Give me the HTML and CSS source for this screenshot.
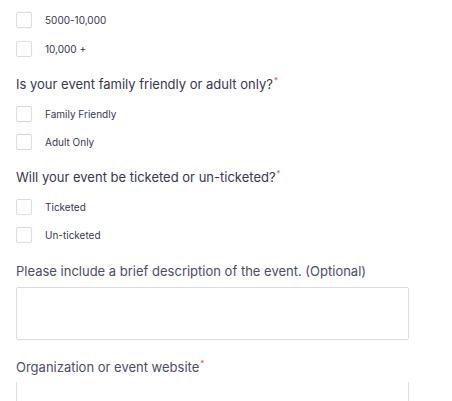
FILE: index.html
```html
<!DOCTYPE html>
<html>
<head>
<meta charset="utf-8">
<link rel="stylesheet" href="styles.css">
</head>
<body>
<div class="form">
  <div class="options first">
    <label class="option"><span class="box"></span><span class="opt-label">5000-10,000</span></label>
    <label class="option"><span class="box"></span><span class="opt-label">10,000 +</span></label>
  </div>

  <div class="question">Is your event family friendly or adult only?<span class="req">*</span></div>
  <div class="options">
    <label class="option"><span class="box"></span><span class="opt-label">Family Friendly</span></label>
    <label class="option"><span class="box"></span><span class="opt-label">Adult Only</span></label>
  </div>

  <div class="question">Will your event be ticketed or un-ticketed?<span class="req">*</span></div>
  <div class="options">
    <label class="option"><span class="box"></span><span class="opt-label">Ticketed</span></label>
    <label class="option"><span class="box"></span><span class="opt-label">Un-ticketed</span></label>
  </div>

  <div class="question q-field">Please include a brief description of the event. (Optional)</div>
  <div class="textarea"></div>

  <div class="question q-field2">Organization or event website<span class="req">*</span></div>
  <div class="input"></div>
</div>
</body>
</html>
```
FILE: styles.css
```css
html, body {
  margin: 0;
  padding: 0;
  background: #ffffff;
  overflow: hidden;
}
.form {
  width: 393px;
  padding: 12px 0 0 16px;
  font-family: Inter, "Noto Sans", sans-serif;
  color: #39364f;
}
.options {
  display: flex;
  flex-direction: column;
  gap: 12px;
  margin-top: 12px;
}
.options.first {
  margin-top: 0;
  gap: 13px;
}
.option {
  display: flex;
  align-items: center;
  height: 16px;
}
.box {
  width: 14px;
  height: 14px;
  border: 1px solid #dbdae3;
  border-radius: 2px;
  flex: none;
}
.opt-label {
  margin-left: 13px;
  font-size: 10px;
  line-height: 16px;
  color: #39364f;
}
.question {
  margin-top: 17px;
  font-family: Inter, "Noto Sans", sans-serif;
  font-size: 13px;
  line-height: 20px;
  color: #39364f;
}
.req {
  color: #e8495f;
  font-size: 8px;
  vertical-align: top;
  line-height: 12px;
  margin-left: 1px;
}
.q-field {
  margin-top: 18px;
  color: #4b4d63;
}
.q-field2 {
  margin-top: 17px;
  color: #4b4d63;
}
.textarea {
  margin-top: 6px;
  height: 51px;
  border: 1px solid #dbdae3;
  border-radius: 2px;
}
.input {
  margin-top: 5px;
  height: 40px;
  border-left: 1px solid #dbdae3;
  border-right: 1px solid #dbdae3;
}
```
